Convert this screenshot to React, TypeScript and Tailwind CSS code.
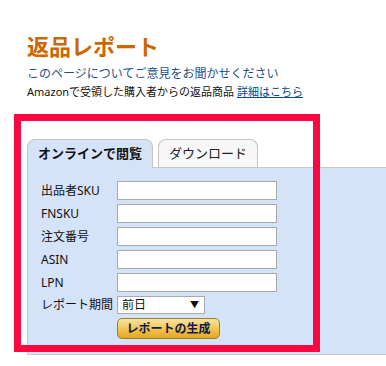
import React from "react";

const font = { fontFamily: '"Noto Sans", "Noto Sans CJK JP", sans-serif' };

function Row({ label }: { label: string }) {
  return (
    <div className="flex items-center h-[19px]">
      <div className="w-[76px] text-[12px] leading-none text-[#111]">{label}</div>
      <input className="block w-[160px] h-[19px] bg-white border border-[#a9a9a9] outline-none" />
    </div>
  );
}

export default function App() {
  return (
    <div className="relative w-[386px] h-[366px] bg-white overflow-hidden" style={font}>
      <div className="pl-[27px] pt-[35px]">
        <h1 className="text-[22px] leading-[22px] font-bold text-[#cc6600]">返品レポート</h1>
        <div className="mt-[9px] text-[12px] leading-[16px] text-[#1d4f8c]">このページについてご意見をお聞かせください</div>
        <div className="mt-[2px] text-[11px] leading-[16px] text-[#111]">
          Amazonで受領した購入者からの返品商品{" "}
          <a className="text-[#004b91] underline">詳細はこちら</a>
        </div>
      </div>

      <div className="ml-[27px] mt-[39px]">
        <div className="flex items-end gap-[5px]">
          <div className="relative z-10 -mb-px h-[29px] w-[126px] rounded-t-[8px] border border-b-0 border-[#c4c4c4] bg-[#d5e3f9] flex items-center justify-center text-[13px] font-bold text-[#111]">
            オンラインで閲覧
          </div>
          <div className="h-[28px] w-[100px] rounded-t-[8px] border border-b-0 border-[#c4c4c4] bg-[#f7f7f7] flex items-center justify-center text-[13px] text-[#222]">
            ダウンロード
          </div>
        </div>
        <div className="border-t border-l border-b border-[#c8c8c8] bg-[#d5e3f9] pl-[13px] pt-[13px] pb-[15px] flex flex-col gap-[4px]">
          <Row label="出品者SKU" />
          <Row label="FNSKU" />
          <Row label="注文番号" />
          <Row label="ASIN" />
          <Row label="LPN" />
          <div className="flex items-center h-[18px]">
            <div className="w-[76px] text-[12px] leading-none text-[#111]">レポート期間</div>
            <div className="relative w-[88px] h-[18px]">
              <select className="block appearance-none w-[88px] h-[18px] bg-white border border-[#a9a9a9] pl-[4px] py-0 text-[12px] leading-none text-[#111] outline-none">
                <option>前日</option>
              </select>
              <span className="absolute right-[6px] top-[4px] text-[9px] leading-none text-[#111] pointer-events-none">▼</span>
            </div>
          </div>
          <div className="pl-[76px]">
            <button className="block w-[103px] h-[21px] rounded-[5px] border border-[#9c7e31] bg-gradient-to-b from-[#f8e3a3] via-[#f2c652] to-[#e3a51d] text-[12px] font-bold leading-none text-[#131a4a]">
              レポートの生成
            </button>
          </div>
        </div>
      </div>

      <div className="absolute left-[14px] top-[114px] w-[306px] h-[238px] border-[7px] border-[#fb0843] pointer-events-none" />
    </div>
  );
}
